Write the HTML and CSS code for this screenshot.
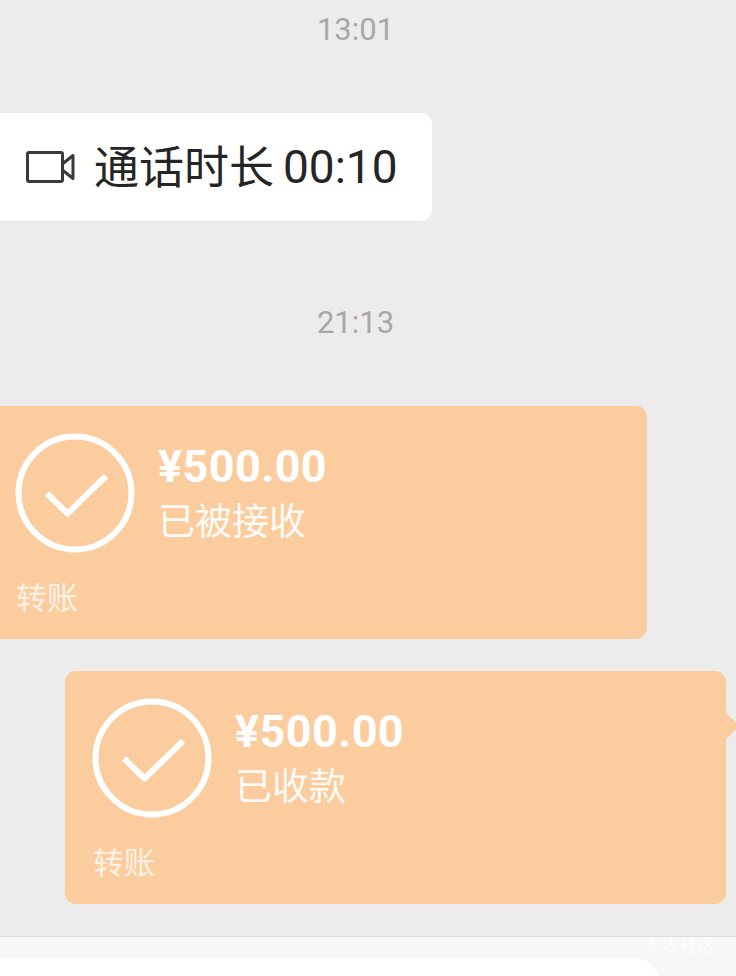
FILE: index.html
```html
<!DOCTYPE html>
<html lang="zh">
<head>
<meta charset="utf-8">
<title>聊天</title>
<link rel="stylesheet" href="styles.css">
</head>
<body>
<div class="screen">
  <main class="chat">
    <div class="time time-first">13:01</div>
    <div class="bubble call">
      <svg class="video" width="50" height="34" viewBox="0 0 50 34" fill="none" stroke="#3a3a3a" stroke-width="3" stroke-linejoin="round">
        <rect x="2.500" y="2.500" width="35" height="29" rx="1.500"/>
        <path d="M38 13.500 48 5.500v23L38 20.500"/>
      </svg>
      <span class="call-text">通话时长</span>
      <span class="call-time">00:10</span>
    </div>
    <div class="time time-second">21:13</div>
    <div class="bubble transfer transfer-left">
      <div class="transfer-main">
        <svg class="check" width="120" height="120" viewBox="0 0 120 120" fill="none" stroke="#fff">
          <circle cx="60" cy="60" r="56.500" stroke-width="6"/>
          <path d="M32 60.500 52.500 80.500 91 43" stroke-width="6" stroke-linejoin="round"/>
        </svg>
        <div class="transfer-info">
          <div class="amount">¥500.00</div>
          <div class="status">已被接收</div>
        </div>
      </div>
      <div class="label">转账</div>
    </div>
    <div class="bubble transfer transfer-right">
      <div class="transfer-main">
        <svg class="check" width="120" height="120" viewBox="0 0 120 120" fill="none" stroke="#fff">
          <circle cx="60" cy="60" r="56.500" stroke-width="6"/>
          <path d="M32 60.500 52.500 80.500 91 43" stroke-width="6" stroke-linejoin="round"/>
        </svg>
        <div class="transfer-info">
          <div class="amount">¥500.00</div>
          <div class="status">已收款</div>
        </div>
      </div>
      <div class="label">转账</div>
      <span class="tail"></span>
    </div>
  </main>
  <footer class="bar">
    <div class="input"></div>
    <span class="watermark">卡农社区</span>
  </footer>
</div>
</body>
</html>
```
FILE: styles.css
```css
* { box-sizing: border-box; }
html, body { margin: 0; padding: 0; }
body {
  width: 736px;
  height: 976px;
  overflow: hidden;
  background: #ececec;
  font-family: "Noto Sans CJK SC", "Noto Sans", sans-serif;
}
.screen {
  width: 736px;
  height: 976px;
  display: flex;
  flex-direction: column;
  overflow: hidden;
}
.chat {
  height: 936px;
  display: flex;
  flex-direction: column;
  align-items: flex-start;
}
.time {
  width: 711px;
  text-align: center;
  font-family: Roboto, sans-serif;
  font-size: 31px;
  line-height: 36px;
  color: #a8a8a8;
}
.time-first { margin-top: 12px; }
.time-second { margin-top: 84px; }
.bubble { border-radius: 11px; }
.call {
  margin-top: 65px;
  margin-left: -20px;
  width: 452px;
  height: 108px;
  background: #fff;
  display: flex;
  align-items: center;
  padding-left: 45px;
  color: #252525;
}
.video { flex: none; }
.call-text {
  margin-left: 19px;
  font-size: 45px;
  line-height: 108px;
  margin-top: -4px;
  white-space: nowrap;
}
.call-time {
  margin-left: 9px;
  font-family: Roboto, sans-serif;
  font-size: 46px;
  line-height: 108px;
  white-space: nowrap;
}
.transfer {
  position: relative;
  height: 233px;
  background: #fbcd9e;
  color: #fff;
}
.transfer-left {
  margin-top: 65px;
  margin-left: -20px;
  width: 667px;
  padding: 27px 0 0 35px;
}
.transfer-right {
  margin-top: 32px;
  margin-left: 65px;
  width: 661px;
  padding: 27px 0 0 27px;
}
.transfer-main { display: flex; align-items: flex-start; }
.check { flex: none; }
.transfer-info { margin-left: 23px; }
.amount {
  font-family: Roboto, sans-serif;
  font-weight: 700;
  font-size: 45px;
  line-height: 52px;
  margin-top: 8px;
  letter-spacing: .4px;
  white-space: nowrap;
}
.status {
  font-size: 37px;
  line-height: 50px;
  margin-top: 1px;
  opacity: .92;
  white-space: nowrap;
}
.label {
  margin-top: 25px;
  margin-left: 1px;
  font-size: 31px;
  line-height: 36px;
  color: rgba(255, 255, 255, .75);
}
.tail {
  position: absolute;
  right: -9px;
  top: 45px;
  width: 20px;
  height: 20px;
  background: #fbcd9e;
  transform: rotate(45deg);
  border-radius: 2px;
}
.bar {
  position: relative;
  height: 40px;
  border-top: 1px solid #dcdcdc;
  background: #f7f7f7;
  padding-top: 22px;
}
.input {
  width: 658px;
  height: 40px;
  background: #fff;
  border-radius: 0 20px 0 0;
}
.watermark {
  position: absolute;
  top: -5px;
  left: 644px;
  font-size: 18px;
  line-height: 24px;
  color: rgba(255, 255, 255, .7);
  white-space: nowrap;
}
```
